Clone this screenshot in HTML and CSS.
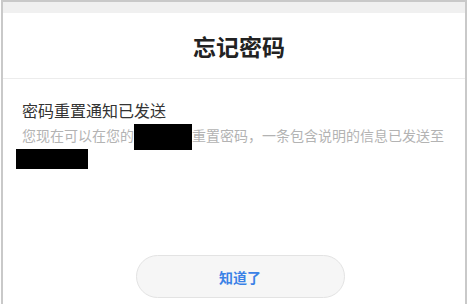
FILE: index.html
```html
<!DOCTYPE html>
<html lang="zh-CN">
<head>
  <meta charset="UTF-8">
  <meta name="viewport" content="width=device-width, initial-scale=1">
  <title>忘记密码</title>
  <link rel="stylesheet" href="styles.css">
</head>
<body>

    <div class="dialog">
        <div class="top-strip"></div>
        <div class="dialog-header">忘记密码</div>

        <div class="dialog-body">
          <p class="notice-title">密码重置通知已发送</p>
          <p class="notice-text">您现在可以在您的<span class="redact redact-a"></span>重置密码，一条包含说明的信息已发送至<span class="redact redact-b"></span></p>
        </div>

        <div class="dialog-footer">
          <button type="button" class="ok-btn">知道了</button>
        </div>
    </div>

</body>
</html>
```

FILE: styles.css
```css
body {
  font-family: "Noto Sans CJK SC", "Noto Sans", sans-serif;
  background-color: #fff;
  margin: 0;
  padding: 0;
}

.dialog {
  width: 462px;
  height: 310px;
  margin-left: 1px;
  border: 2px solid #c9c9c9;
  border-bottom: none;
  background: white;
  display: flex;
  flex-direction: column;
}

.top-strip {
  height: 11px;
  background-color: #f0f0f0;
}

.dialog-header {
  height: 65px;
  border-bottom: 1px solid #ececec;
  display: flex;
  align-items: center;
  justify-content: center;
  padding-left: 10px;
  font-size: 23px;
  font-weight: 700;
  color: #222;
}

.dialog-body {
  padding: 20px 19px 0 19px;
}

.notice-title {
  margin: 0 0 4px;
  font-size: 16px;
  line-height: 22px;
  color: #333;
}

.notice-text {
  margin: 0;
  font-size: 14px;
  line-height: 20px;
  color: #b3b3b3;
}

.redact {
  display: inline-block;
  background: #000;
  vertical-align: middle;
}

.redact-a {
  width: 58px;
  height: 26px;
  margin: -3px 0;
}

.redact-b {
  width: 72px;
  height: 20px;
  margin-left: -6px;
}

.dialog-footer {
  margin-top: auto;
  padding: 0 0 14px 12px;
  display: flex;
  justify-content: center;
}

.ok-btn {
  width: 209px;
  height: 43px;
  border: 1px solid #e3e3e3;
  border-radius: 22px;
  background-color: #f6f6f6;
  color: #3b82e6;
  font-family: inherit;
  font-size: 14px;
  font-weight: 700;
  cursor: pointer;
}
```
